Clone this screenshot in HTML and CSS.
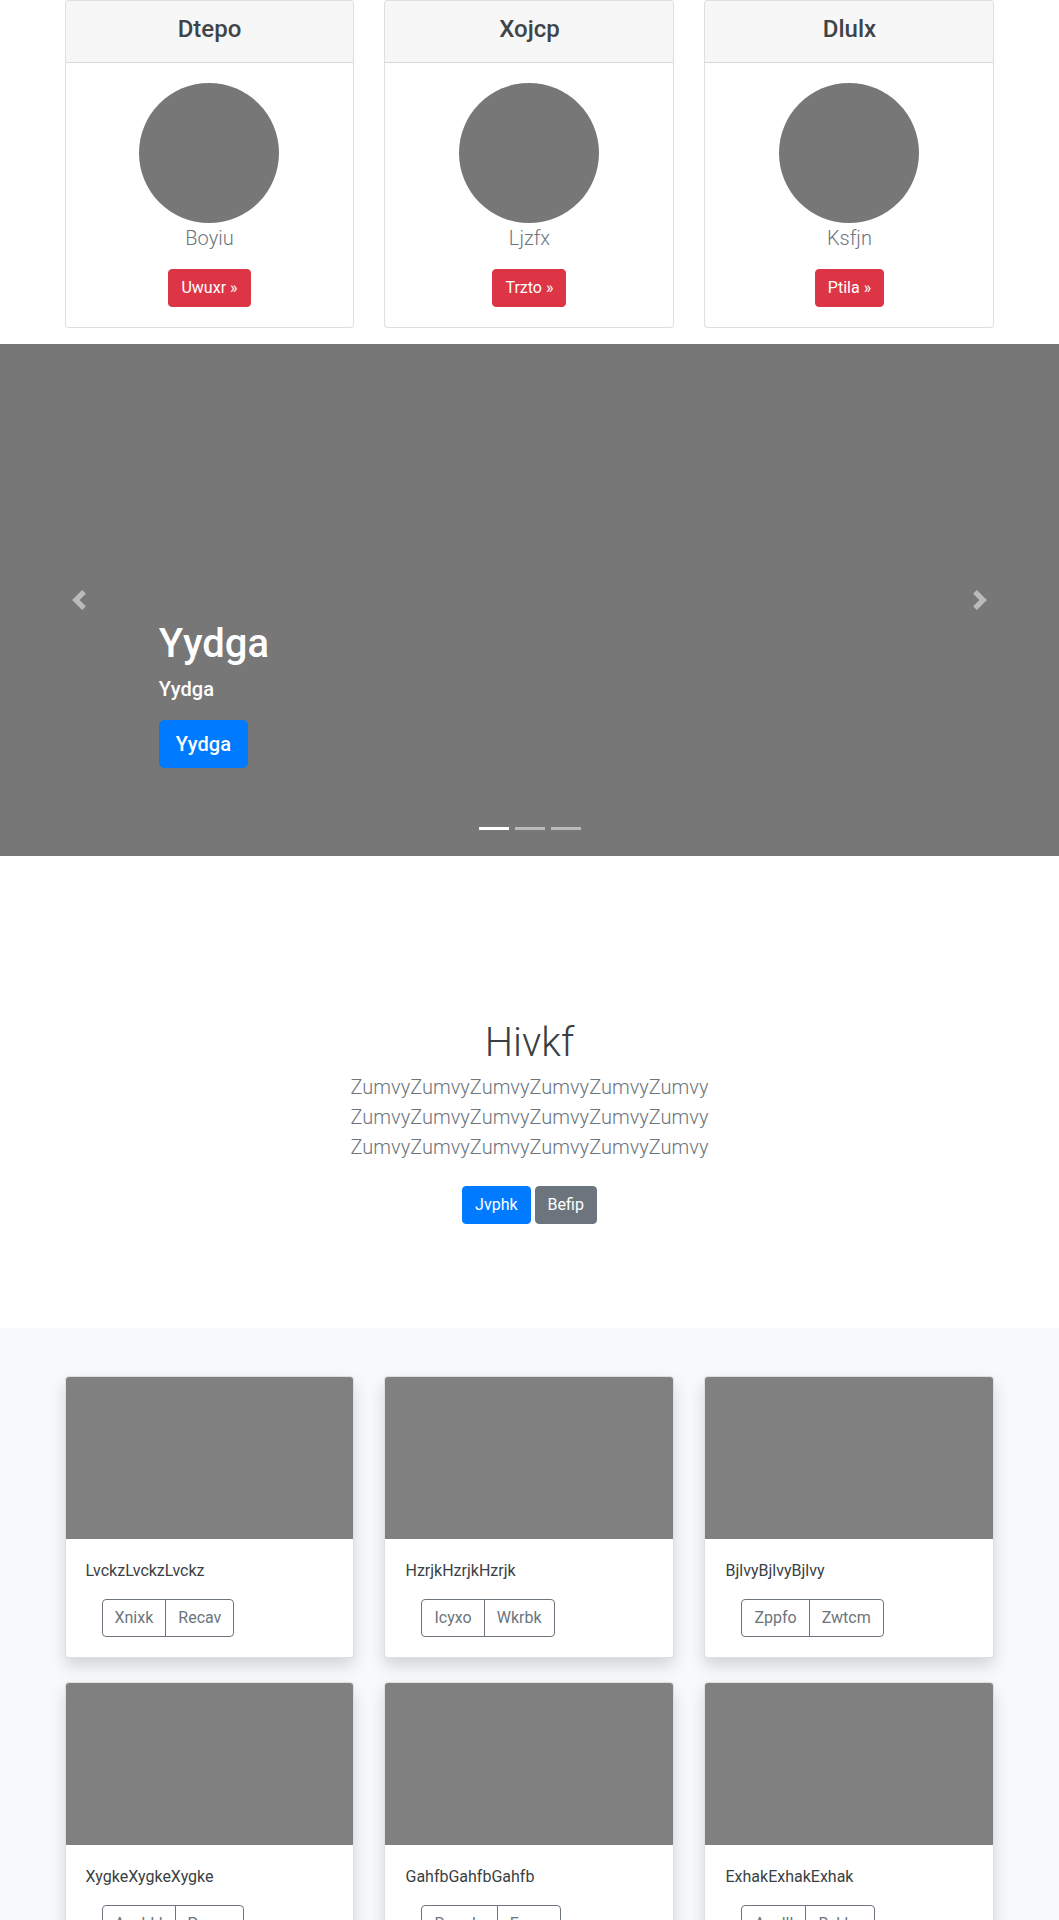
FILE: index.html
```html
<!DOCTYPE html>
<html lang="en">
<head>
<meta charset="utf-8">
<title>Page</title>
<link rel="stylesheet" href="styles.css">
</head>
<body>
<div class="container">
  <div class="row">
    <div class="col">
      <div class="card pricing-card">
        <div class="card-header"><h4>Dtepo</h4></div>
        <div class="card-body text-center">
          <div class="avatar"></div>
          <p class="lead muted">Boyiu</p>
          <a class="btn btn-danger" href="#">Uwuxr &raquo;</a>
        </div>
      </div>
    </div>
    <div class="col">
      <div class="card pricing-card">
        <div class="card-header"><h4>Xojcp</h4></div>
        <div class="card-body text-center">
          <div class="avatar"></div>
          <p class="lead muted">Ljzfx</p>
          <a class="btn btn-danger" href="#">Trzto &raquo;</a>
        </div>
      </div>
    </div>
    <div class="col">
      <div class="card pricing-card">
        <div class="card-header"><h4>Dlulx</h4></div>
        <div class="card-body text-center">
          <div class="avatar"></div>
          <p class="lead muted">Ksfjn</p>
          <a class="btn btn-danger" href="#">Ptila &raquo;</a>
        </div>
      </div>
    </div>
  </div>
</div>

<div class="carousel">
  <ol class="indicators">
    <li class="active"></li>
    <li></li>
    <li></li>
  </ol>
  <div class="carousel-caption">
    <h1>Yydga</h1>
    <p>Yydga</p>
    <p><a class="btn btn-lg btn-primary" href="#">Yydga</a></p>
  </div>
  <a class="control control-prev" href="#">
    <svg viewBox="0 0 8 8" width="20" height="20"><path fill="#fff" d="M5.25 0l-4 4 4 4 1.5-1.5L4.25 4l2.5-2.5L5.25 0z"/></svg>
  </a>
  <a class="control control-next" href="#">
    <svg viewBox="0 0 8 8" width="20" height="20"><path fill="#fff" d="M2.75 0l-1.5 1.5L3.75 4l-2.5 2.5L2.75 8l4-4-4-4z"/></svg>
  </a>
</div>

<section class="jumbotron">
  <div class="narrow">
    <h1>Hivkf</h1>
    <p class="lead muted">ZumvyZumvyZumvyZumvyZumvyZumvy ZumvyZumvyZumvyZumvyZumvyZumvy ZumvyZumvyZumvyZumvyZumvyZumvy</p>
    <p class="actions">
      <a class="btn btn-primary" href="#">Jvphk</a>
      <a class="btn btn-secondary" href="#">Befip</a>
    </p>
  </div>
</section>

<div class="album">
  <div class="container">
    <div class="row">
      <div class="col">
        <div class="card album-card">
          <div class="thumb"></div>
          <div class="card-body">
            <p class="card-text">LvckzLvckzLvckz</p>
            <div class="btn-group">
              <a class="btn btn-outline" href="#">Xnixk</a>
              <a class="btn btn-outline" href="#">Recav</a>
            </div>
          </div>
        </div>
      </div>
      <div class="col">
        <div class="card album-card">
          <div class="thumb"></div>
          <div class="card-body">
            <p class="card-text">HzrjkHzrjkHzrjk</p>
            <div class="btn-group">
              <a class="btn btn-outline" href="#">Icyxo</a>
              <a class="btn btn-outline" href="#">Wkrbk</a>
            </div>
          </div>
        </div>
      </div>
      <div class="col">
        <div class="card album-card">
          <div class="thumb"></div>
          <div class="card-body">
            <p class="card-text">BjlvyBjlvyBjlvy</p>
            <div class="btn-group">
              <a class="btn btn-outline" href="#">Zppfo</a>
              <a class="btn btn-outline" href="#">Zwtcm</a>
            </div>
          </div>
        </div>
      </div>
      <div class="col">
        <div class="card album-card">
          <div class="thumb"></div>
          <div class="card-body">
            <p class="card-text">XygkeXygkeXygke</p>
            <div class="btn-group">
              <a class="btn btn-outline" href="#">Auxbkl</a>
              <a class="btn btn-outline" href="#">Pyaxn</a>
            </div>
          </div>
        </div>
      </div>
      <div class="col">
        <div class="card album-card">
          <div class="thumb"></div>
          <div class="card-body">
            <p class="card-text">GahfbGahfbGahfb</p>
            <div class="btn-group">
              <a class="btn btn-outline" href="#">Rsmdo</a>
              <a class="btn btn-outline" href="#">Eeuw</a>
            </div>
          </div>
        </div>
      </div>
      <div class="col">
        <div class="card album-card">
          <div class="thumb"></div>
          <div class="card-body">
            <p class="card-text">ExhakExhakExhak</p>
            <div class="btn-group">
              <a class="btn btn-outline" href="#">Aoxlll</a>
              <a class="btn btn-outline" href="#">Bxkbc</a>
            </div>
          </div>
        </div>
      </div>
    </div>
  </div>
</div>
</body>
</html>
```

FILE: styles.css
```css
*, *::before, *::after { box-sizing: border-box; }

body {
  margin: 0;
  font-family: Roboto, "Open Sans", "Liberation Sans", sans-serif;
  font-size: 16px;
  line-height: 1.5;
  color: #212529;
  background: #fff;
}

a { text-decoration: none; }

.container {
  width: 960px;
  max-width: 100%;
  margin: 0 auto;
  padding: 0 15px;
}

.row {
  display: flex;
  flex-wrap: wrap;
  margin: 0 -15px;
}

.col {
  flex: 0 0 33.3333%;
  max-width: 33.3333%;
  padding: 0 15px;
}

.text-center { text-align: center; }
.muted { color: #6c757d; }

.card {
  display: flex;
  flex-direction: column;
  background: #fff;
  border: 1px solid rgba(0, 0, 0, .125);
  border-radius: 4px;
}

.pricing-card { margin-bottom: 16px; }

.card-header {
  padding: 14px 20px 10px;
  background: rgba(0, 0, 0, .03);
  border-bottom: 1px solid rgba(0, 0, 0, .125);
  border-radius: 3px 3px 0 0;
  text-align: center;
}

.card-header h4 {
  margin: 0 0 8px;
  font-size: 24px;
  font-weight: 500;
  line-height: 1.2;
  color: #3f4449;
}

.card-body { padding: 20px; }

.avatar {
  width: 140px;
  height: 140px;
  border-radius: 50%;
  background: #777;
  margin: 0 auto;
}

.lead {
  font-size: 20px;
  font-weight: 300;
  margin: 0 0 16px;
}

.btn {
  display: inline-block;
  font-size: 16px;
  font-weight: 400;
  line-height: 1.5;
  padding: 6px 12px;
  border: 1px solid transparent;
  border-radius: 4px;
  text-align: center;
  vertical-align: middle;
}

.btn-danger { background: #dc3545; border-color: #dc3545; color: #fff; }
.btn-primary { background: #007bff; border-color: #007bff; color: #fff; }
.btn-secondary { background: #6c757d; border-color: #6c757d; color: #fff; }
.btn-outline { background: transparent; border-color: #6c757d; color: #6c757d; }

.btn-lg {
  font-size: 20px;
  padding: 8px 16px;
  border-radius: 5px;
}

/* Carousel */
.carousel {
  position: relative;
  height: 512px;
  background: #777;
  margin-bottom: 64px;
  overflow: hidden;
}

.carousel-caption {
  position: absolute;
  left: 15%;
  right: 15%;
  bottom: 52px;
  padding: 20px 0;
  color: #fff;
  text-align: left;
  z-index: 10;
}

.carousel-caption h1 {
  margin: 0 0 6px;
  font-size: 40px;
  font-weight: 500;
  line-height: 1.2;
}

.carousel-caption p {
  margin: 0 0 16px;
  font-size: 20px;
  font-weight: 500;
}

.carousel-caption .btn-lg { font-weight: 500; }

.control {
  position: absolute;
  top: 0;
  bottom: 0;
  width: 15%;
  display: flex;
  align-items: center;
  justify-content: center;
  opacity: .5;
  z-index: 5;
}

.control-prev { left: 0; }
.control-next { right: 0; }
.control svg { display: block; width: 20px; height: 20px; }

.indicators {
  position: absolute;
  left: 15%;
  right: 15%;
  bottom: 0;
  margin: 0 0 16px;
  padding: 0;
  list-style: none;
  display: flex;
  justify-content: center;
  z-index: 15;
}

.indicators li {
  box-sizing: content-box;
  width: 30px;
  height: 3px;
  margin: 0 3px;
  background: #fff;
  background-clip: padding-box;
  border-top: 10px solid transparent;
  border-bottom: 10px solid transparent;
  opacity: .5;
}

.indicators li.active { opacity: 1; }

/* Jumbotron */
.jumbotron {
  padding: 96px 0;
  text-align: center;
  background: #fff;
}

.narrow {
  max-width: 640px;
  margin: 0 auto;
  padding: 0 15px;
}

.jumbotron h1 {
  margin: 0 0 8px;
  padding-top: 3px;
  font-size: 40px;
  font-weight: 300;
  line-height: 1.2;
  color: #3a3f44;
}

.jumbotron .lead { margin-top: -3px; }
.jumbotron .actions { margin: 0; }
.jumbotron .btn { margin: 8px 0; }

/* Album */
.album {
  background: #f8f9fa;
  padding: 48px 0;
}

.album-card {
  margin-bottom: 24px;
  overflow: hidden;
  box-shadow: 0 8px 16px rgba(0, 0, 0, .15);
}

.thumb {
  aspect-ratio: 16 / 9;
  background: #808080;
}

.card-text {
  margin: 0 0 16px;
  color: #3a3f44;
}

.btn-group {
  display: inline-flex;
  margin-left: 16px;
}

.btn-group .btn:first-child {
  border-top-right-radius: 0;
  border-bottom-right-radius: 0;
}

.btn-group .btn + .btn {
  margin-left: -1px;
  border-top-left-radius: 0;
  border-bottom-left-radius: 0;
}
```
